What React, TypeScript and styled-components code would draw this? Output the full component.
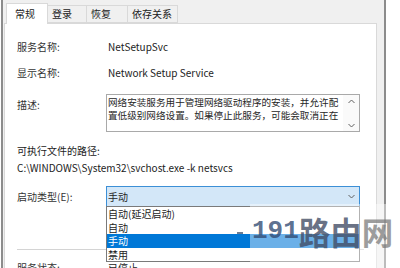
import styled, { createGlobalStyle } from "styled-components";

const GlobalStyle = createGlobalStyle`
  html, body {
    margin: 0;
    padding: 0;
    background: #fff;
  }
  body {
    font-family: "Noto Sans CJK SC", "Noto Sans", sans-serif;
    color: #262626;
  }
`;

const Page = styled.div`
  width: 400px;
  height: 268px;
  position: relative;
  overflow: hidden;
  display: flex;
  background: #fff;
`;

const Window = styled.div`
  width: 381px;
  height: 268px;
  margin-left: 1px;
  border-left: 2px solid #8c8c8c;
  border-right: 2px solid #8c8c8c;
  background: #f0f0f0;
  display: flex;
  flex-direction: column;
`;

const TabBar = styled.div`
  height: 23px;
  display: flex;
  align-items: flex-end;
  padding-left: 4px;
  flex-shrink: 0;
`;

const Tab = styled.div<{ $w: number; $on?: boolean }>`
  width: ${(p) => p.$w}px;
  height: ${(p) => (p.$on ? 21 : 18)}px;
  box-sizing: border-box;
  margin-left: -1px;
  margin-bottom: ${(p) => (p.$on ? -1 : 0)}px;
  position: relative;
  z-index: ${(p) => (p.$on ? 2 : 1)};
  border: 1px solid #d9d9d9;
  border-bottom: ${(p) => (p.$on ? "none" : "1px solid #d9d9d9")};
  background: ${(p) => (p.$on ? "#fff" : "#f0f0f0")};
  padding-left: ${(p) => (p.$on ? 8 : 4)}px;
  font-size: 10px;
  line-height: ${(p) => (p.$on ? 19 : 16)}px;
  color: #222;
`;

const Panel = styled.div`
  flex: 1;
  margin: 0 7px 0 1px;
  border: 1px solid #d9d9d9;
  border-bottom: none;
  background: #fff;
  padding: 15px 12px 0 12px;
  font-size: 10px;
`;

const Row = styled.div<{ $top: number; $align?: string }>`
  display: flex;
  align-items: ${(p) => p.$align || "center"};
  margin-top: ${(p) => p.$top}px;
`;

const Label = styled.div<{ $pad?: number }>`
  width: 89px;
  flex-shrink: 0;
  line-height: 16px;
  padding-top: ${(p) => p.$pad || 0}px;
  color: #333;
`;

const Value = styled.div`
  line-height: 16px;
  padding-left: 2px;
  color: #222;
`;

const Line = styled.div<{ $top?: number }>`
  line-height: 16px;
  margin-top: ${(p) => p.$top || 0}px;
  color: #222;
  white-space: nowrap;
`;

const DescBox = styled.div`
  width: 254px;
  height: 38px;
  box-sizing: border-box;
  border: 1px solid #a9a9a9;
  display: flex;
`;

const DescText = styled.div`
  flex: 1;
  min-width: 0;
  padding: 1px 0 0 1px;
  font-size: 9.6px;
  line-height: 12.5px;
  overflow: hidden;
  span {
    display: block;
    white-space: nowrap;
  }
`;

const ScrollCol = styled.div`
  width: 16px;
  flex-shrink: 0;
  display: flex;
  flex-direction: column;
  justify-content: space-between;
  align-items: center;
  padding: 4px 0 3px;
  background: #fafafa;
`;

const StartupWrap = styled.div`
  position: relative;
`;

const Combo = styled.div`
  width: 254px;
  height: 21px;
  box-sizing: border-box;
  border: 1px solid #3c8fd6;
  background: #d3e7f8;
  display: flex;
  align-items: center;
  justify-content: space-between;
  padding: 0 4px 0 1px;
  line-height: 16px;
`;

const DropList = styled.div`
  position: absolute;
  top: 20px;
  left: 0;
  width: 254px;
  box-sizing: border-box;
  border: 1px solid #7a7a7a;
  background: #fff;
  z-index: 3;
`;

const Item = styled.div<{ $on?: boolean }>`
  height: 13.5px;
  line-height: 13.5px;
  padding-left: 1px;
  background: ${(p) => (p.$on ? "#0078d7" : "transparent")};
  color: ${(p) => (p.$on ? "#fff" : "#222")};
`;

const Separator = styled.div`
  height: 1px;
  background: #d4d4d4;
  margin-top: 42px;
`;

const Shade = styled.div`
  position: absolute;
  left: 250px;
  top: 204px;
  width: 150px;
  height: 64px;
  background: rgba(255, 255, 255, 0.42);
  z-index: 5;
`;

const Mark = styled.div`
  position: absolute;
  left: 237px;
  top: 213px;
  z-index: 6;
  display: flex;
  align-items: center;
  white-space: nowrap;
`;

const Dash = styled.span`
  width: 6px;
  height: 2px;
  background: rgba(60, 80, 110, 0.75);
  margin-right: 9px;
  margin-top: 4px;
`;

const Digits = styled.span`
  font-family: "Liberation Mono", monospace;
  font-weight: bold;
  font-size: 26px;
  color: rgba(50, 75, 115, 0.8);
`;

const Han = styled.span<{ $gray?: boolean }>`
  font-family: "Noto Sans CJK SC", sans-serif;
  font-weight: bold;
  font-size: 31.5px;
  line-height: 36px;
  color: ${(p) => (p.$gray ? "rgba(120, 120, 120, 0.72)" : "rgba(65, 75, 100, 0.78)")};
`;

const Chevron = ({ up }: { up?: boolean }) => (
  <svg width="7" height="5" viewBox="0 0 7 5">
    <path
      d={up ? "M0.5 4 L3.5 1 L6.5 4" : "M0.5 1 L3.5 4 L6.5 1"}
      fill="none"
      stroke="#606060"
      strokeWidth="1"
    />
  </svg>
);

const tabs = [
  { label: "常规", w: 42, on: true },
  { label: "登录", w: 40 },
  { label: "恢复", w: 42 },
  { label: "依存关系", w: 51 },
];

const options = ["自动(延迟启动)", "自动", "手动", "禁用"];

export default function App() {
  return (
    <Page>
      <GlobalStyle />
      <Window>
        <TabBar>
          {tabs.map((t) => (
            <Tab key={t.label} $w={t.w} $on={t.on}>
              {t.label}
            </Tab>
          ))}
        </TabBar>
        <Panel>
          <Row $top={0}>
            <Label>服务名称:</Label>
            <Value>NetSetupSvc</Value>
          </Row>
          <Row $top={10}>
            <Label>显示名称:</Label>
            <Value>Network Setup Service</Value>
          </Row>
          <Row $top={13} $align="flex-start">
            <Label $pad={3}>描述:</Label>
            <DescBox>
              <DescText>
                <span>网络安装服务用于管理网络驱动程序的安装，并允许配</span>
                <span>置低级别网络设置。如果停止此服务，可能会取消正在</span>
              </DescText>
              <ScrollCol>
                <Chevron up />
                <Chevron />
              </ScrollCol>
            </DescBox>
          </Row>
          <Line $top={11}>可执行文件的路径:</Line>
          <Line $top={1}>C:\WINDOWS\System32\svchost.exe -k netsvcs</Line>
          <Row $top={10}>
            <Label>启动类型(E):</Label>
            <StartupWrap>
              <Combo>
                <span>手动</span>
                <Chevron />
              </Combo>
              <DropList>
                {options.map((o) => (
                  <Item key={o} $on={o === "手动"}>
                    {o}
                  </Item>
                ))}
              </DropList>
            </StartupWrap>
          </Row>
          <Separator />
          <Row $top={10}>
            <Label>服务状态:</Label>
            <Value>已停止</Value>
          </Row>
        </Panel>
      </Window>
      <Shade />
      <Mark>
        <Dash />
        <Digits>191</Digits>
        <Han>路由</Han>
        <Han $gray>网</Han>
      </Mark>
    </Page>
  );
}
